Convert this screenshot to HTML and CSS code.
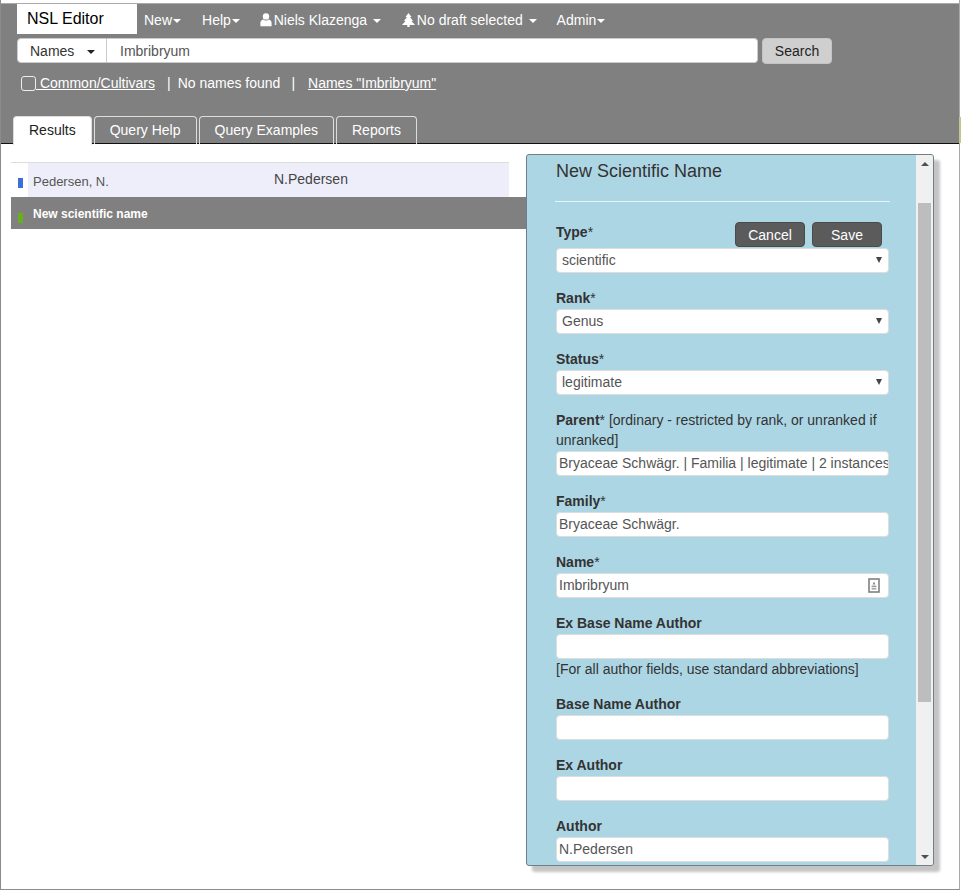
FILE: index.html
```html
<!DOCTYPE html>
<html lang="en">
<head>
    <meta charset="UTF-8">
    <title>NSL Editor</title>
    <link rel="stylesheet" href="styles.css">
</head>
<body>
<div class="window">
    <header class="top">
        <nav class="menubar">
            <a class="brand">NSL Editor</a>
            <a class="menu menu-new">New<span class="caret"></span></a>
            <a class="menu menu-help">Help<span class="caret"></span></a>
            <a class="menu menu-user">
                <svg class="icon icon-user" viewBox="0 0 12 14"><circle cx="6" cy="3.4" r="3.2"/><path d="M0.4 13.2V9.6C0.4 7.6 2 6.6 3.4 6.4 4.2 7.2 5 7.5 6 7.5S7.8 7.2 8.6 6.4C10 6.6 11.6 7.6 11.6 9.6V13.2Z"/></svg>
                Niels Klazenga <span class="caret caret-gap"></span>
            </a>
            <a class="menu menu-draft">
                <svg class="icon icon-tree" viewBox="0 0 13 14"><path d="M6.5 0 9.5 4H8L11 8H9.5L13 12H7.7V14H5.3V12H0L3.5 8H2L5 4H3.5Z"/></svg>
                No draft selected <span class="caret caret-gap"></span>
            </a>
            <a class="menu menu-admin">Admin<span class="caret"></span></a>
        </nav>
        <form class="searchbar">
            <div class="search-type">Names <span class="caret caret-dark"></span></div>
            <div class="search-input">Imbribryum</div>
            <button type="button" class="search-btn">Search</button>
        </form>
        <div class="search-info">
            <span class="checkbox"></span>
            <a class="info-link">&nbsp;Common/Cultivars</a>
            <span class="sep">|</span>
            <span>No names found</span>
            <span class="sep sep-wide">|</span>
            <a class="info-link">Names "Imbribryum"</a>
        </div>
        <ul class="tabs">
            <li class="tab tab-active">Results</li>
            <li class="tab">Query Help</li>
            <li class="tab">Query Examples</li>
            <li class="tab">Reports</li>
        </ul>
    </header>

    <main class="content">
        <section class="results">
            <div class="row row-author">
                <span class="mark mark-blue"></span>
                <span class="cell-name">Pedersen, N.</span>
                <span class="cell-abbrev">N.Pedersen</span>
            </div>
            <div class="row row-new">
                <span class="mark mark-green"></span>
                <span class="cell-name">New scientific name</span>
            </div>
        </section>

        <aside class="panel">
            <div class="panel-body">
                <h4 class="panel-title">New Scientific Name</h4>
                <hr class="panel-rule">
                <div class="field field-first">
                    <div class="field-head">
                        <label><b>Type</b>*</label>
                        <div class="actions">
                            <button type="button" class="btn">Cancel</button>
                            <button type="button" class="btn">Save</button>
                        </div>
                    </div>
                    <div class="control control-select">scientific<span class="select-arrow"></span></div>
                </div>
                <div class="field">
                    <label><b>Rank</b>*</label>
                    <div class="control control-select">Genus<span class="select-arrow"></span></div>
                </div>
                <div class="field">
                    <label><b>Status</b>*</label>
                    <div class="control control-select">legitimate<span class="select-arrow"></span></div>
                </div>
                <div class="field">
                    <label><b>Parent</b>* [ordinary - restricted by rank, or unranked if<br>unranked]</label>
                    <div class="control control-text">Bryaceae Schwägr. | Familia | legitimate | 2 instances</div>
                </div>
                <div class="field">
                    <label><b>Family</b>*</label>
                    <div class="control control-text">Bryaceae Schwägr.</div>
                </div>
                <div class="field">
                    <label><b>Name</b>*</label>
                    <div class="control control-text control-icon">Imbribryum
                        <svg class="contact-icon" viewBox="0 0 12 15"><rect x="1" y="1" width="10" height="13" fill="none" stroke="#808080" stroke-width="1.6"/><path d="M6 3.6 7.4 6.6H4.6Z" fill="#888"/><rect x="3.6" y="7.6" width="4.8" height="1.6" fill="#999"/><rect x="3.6" y="10" width="4.8" height="1.6" fill="#aaa"/></svg>
                    </div>
                </div>
                <div class="field">
                    <label><b>Ex Base Name Author</b></label>
                    <div class="control control-text"></div>
                    <p class="hint">[For all author fields, use standard abbreviations]</p>
                </div>
                <div class="field">
                    <label><b>Base Name Author</b></label>
                    <div class="control control-text"></div>
                </div>
                <div class="field">
                    <label><b>Ex Author</b></label>
                    <div class="control control-text"></div>
                </div>
                <div class="field">
                    <label><b>Author</b></label>
                    <div class="control control-text">N.Pedersen</div>
                </div>
            </div>
            <div class="scrollbar">
                <span class="scroll-up"></span>
                <div class="scroll-track"><div class="scroll-thumb"></div></div>
                <span class="scroll-down"></span>
            </div>
        </aside>
    </main>
</div>
<div class="edge-strip"></div>
</body>
</html>
```

FILE: styles.css
```css
html, body {
    margin: 0;
    padding: 0;
    height: 100%;
    background-color: #fff;
    overflow: hidden;
}
body {
    position: relative;
    font-family: "Liberation Sans", Arial, sans-serif;
    font-size: 14px;
    color: #333;
}
.window {
    position: relative;
    width: 960px;
    height: 890px;
    box-sizing: border-box;
    border-left: 1px solid #8c8c8c;
    border-bottom: 1px solid #8c8c8c;
    border-right: 1px solid #a8a8a8;
    overflow: hidden;
}
/* bit of the window behind, showing down the right edge */
.edge-strip {
    position: absolute;
    top: 117px;
    left: 959px;
    width: 2px;
    height: 26px;
    background-color: #c6c68c;
}

/* top grey area */
.top {
    height: 139px;
    margin-top: 3px;
    padding-left: 1px;
    background-color: #808080;
    border-bottom: 1px solid #111;
    border-top: 1px solid #aaa;
    color: #fff;
}
.menubar {
    display: flex;
    align-items: flex-start;
    height: 33px;
    padding-left: 15px;
}
.brand {
    width: 120px;
    height: 30px;
    box-sizing: border-box;
    padding: 6px 0 0 10px;
    font-size: 16px;
    color: #000;
    background-color: #fff;
}
.menu {
    display: block;
    padding-top: 8px;
    color: #fff;
    white-space: nowrap;
}
.menu-new { margin-left: 7px; }
.menu-help { margin-left: 21px; }
.menu-user { margin-left: 20px; }
.menu-draft { margin-left: 21px; }
.menu-admin { margin-left: 20px; }
.icon {
    height: 14px;
    fill: #fff;
    vertical-align: -2px;
}
.icon-user { width: 12px; margin-right: -2px; }
.icon-tree { width: 13px; margin-right: -2px; }
.caret {
    display: inline-block;
    width: 0;
    height: 0;
    margin-left: 1px;
    vertical-align: middle;
    border-top: 4px solid #fff;
    border-left: 4px solid transparent;
    border-right: 4px solid transparent;
}
.caret-gap { margin-left: 2px; }
.caret-dark { border-top-color: #222; margin-left: 9px; }

.searchbar {
    display: flex;
    align-items: flex-start;
    padding-left: 15px;
    height: 26px;
    margin-top: 1px;
}
.search-type {
    width: 90px;
    height: 25px;
    box-sizing: border-box;
    padding: 4px 0 0 12px;
    color: #333;
    background-color: #fff;
    border: 1px solid #ccc;
    border-radius: 4px 0 0 4px;
}
.search-input {
    width: 651px;
    height: 25px;
    box-sizing: border-box;
    padding: 4px 0 0 13px;
    color: #555;
    background-color: #fff;
    border: 1px solid #ccc;
    border-left: 0;
    border-radius: 0 4px 4px 0;
}
.search-btn {
    width: 70px;
    height: 26px;
    margin-left: 4px;
    padding: 0;
    font: inherit;
    color: #222;
    background-color: #cfcfcf;
    border: 1px solid #c4c4c4;
    border-radius: 4px;
}
.search-info {
    display: flex;
    align-items: center;
    height: 20px;
    margin-top: 9px;
    padding-left: 19px;
    color: #fff;
}
.checkbox {
    width: 13px;
    height: 13px;
    border: 1px solid #eee;
    border-radius: 3px;
}
.info-link { text-decoration: underline; }
.sep { margin: 0 7px 0 12px; }
.sep-wide { margin: 0 13px 0 11px; }

.tabs {
    display: flex;
    list-style: none;
    margin: 23px 0 0;
    padding: 0 0 0 11px;
    height: 28px;
    gap: 2px;
}
.tab {
    height: 28px;
    padding: 5px 15px 0;
    box-sizing: border-box;
    color: #fff;
    border: 1px solid #ddd;
    border-bottom: 0;
    border-radius: 4px 4px 0 0;
}
.tab-active {
    position: relative;
    height: 29px;
    color: #222;
    background-color: #fff;
}

/* results list */
.content { position: relative; height: 746px; }
.results {
    padding: 18px 0 0 10px;
    width: 516px;
}
.row {
    display: flex;
    position: relative;
}
.row-author {
    height: 34px;
    margin-right: 18px;
    border-top: 1px solid #ddd;
    background: linear-gradient(to right, #fff 17px, #eeeefb 17px);
    color: #555;
}
.row-new {
    height: 32px;
    background-color: #808080;
    color: #fff;
    font-weight: bold;
}
.mark {
    width: 5px;
    height: 10px;
    margin: 15px 0 0 7px;
}
.mark-blue { background-color: #3b6fdc; }
.mark-green { background-color: #66b01f; margin-top: 16px; }
.cell-name { margin: 11px 0 0 10px; font-size: 13px; width: 241px; }
.row-new .cell-name { font-size: 12px; margin-top: 10px; }
.cell-abbrev { margin-top: 8px; color: #444; }

/* new name panel, floats over the list */
.panel {
    position: absolute;
    top: 10px;
    left: 525px;
    width: 408px;
    height: 712px;
    box-sizing: border-box;
    display: flex;
    background-color: #add6e5;
    border: 1px solid #6f7f88;
    border-radius: 3px;
    box-shadow: 6px 6px 3px #c4c4c4;
    overflow: hidden;
}
.panel-body {
    flex: 1;
    padding: 0 27px 0 29px;
    overflow: hidden;
}
.panel-title {
    margin: 6px 0 0 0;
    font-size: 18px;
    font-weight: normal;
    line-height: 20px;
    color: #333;
}
.panel-rule {
    height: 1px;
    margin: 20px -1px 0 -1px;
    border: 0;
    background-color: #e6f3f8;
}
.field { margin-top: 15px; }
.field-first { margin-top: 20px; }
.field-head {
    display: flex;
    justify-content: space-between;
    height: 27px;
    margin-bottom: -1px;
}
.actions {
    display: flex;
    gap: 7px;
    padding-right: 7px;
}
.btn {
    width: 70px;
    height: 25px;
    padding: 0;
    font: inherit;
    color: #fff;
    background-color: #5b5b5b;
    border: 1px solid #4a4a4a;
    border-radius: 4px;
}
label {
    display: block;
    line-height: 20px;
    margin-bottom: 1px;
}
.control {
    position: relative;
    height: 25px;
    box-sizing: border-box;
    color: #555;
    background-color: #fff;
    border: 1px solid #ddd;
    border-radius: 4px;
    white-space: nowrap;
    overflow: hidden;
    line-height: 23px;
}
.control-select { padding-left: 5px; }
.control-text { padding-left: 2px; }
.select-arrow {
    position: absolute;
    right: 6px;
    top: 8px;
    width: 0;
    height: 0;
    border-top: 6px solid #444;
    border-left: 3px solid transparent;
    border-right: 3px solid transparent;
}
.contact-icon {
    position: absolute;
    right: 8px;
    top: 4px;
    width: 12px;
    height: 15px;
}
.hint {
    margin: 0;
    line-height: 20px;
}

/* panel's own scrollbar */
.scrollbar {
    width: 17px;
    flex: none;
    display: flex;
    flex-direction: column;
    background-color: #f0f0f0;
}
.scroll-up, .scroll-down {
    display: block;
    width: 0;
    height: 0;
    border-left: 4px solid transparent;
    border-right: 4px solid transparent;
}
.scroll-up { margin: 7px auto 6px; border-bottom: 4px solid #505050; }
.scroll-down { margin: 0 auto 6px; border-top: 4px solid #505050; }
.scroll-track { flex: 1; padding: 31px 0 153px; min-height: 0; }
.scroll-thumb { height: 100%; margin: 0 2px; background-color: #bdbdbd; }
```
